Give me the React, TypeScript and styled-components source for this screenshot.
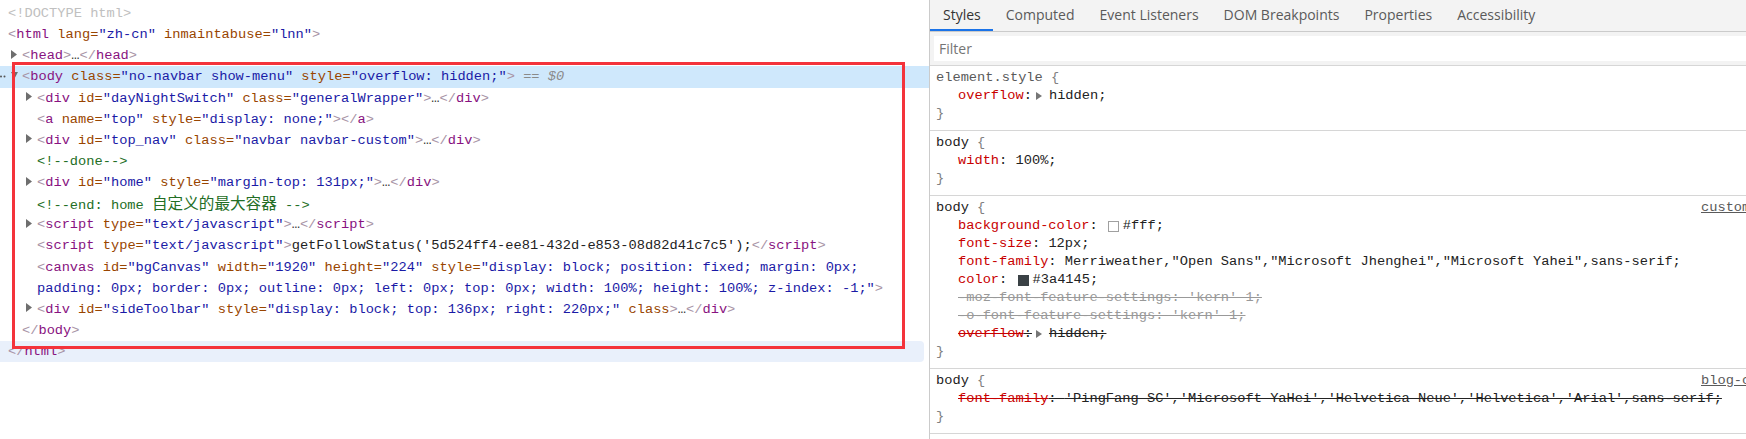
import React from "react";
import styled, { createGlobalStyle } from "styled-components";

const MONO = `"Liberation Mono", "DejaVu Sans Mono", monospace`;
const UI = `"Open Sans", "Noto Sans", sans-serif`;

type Attr = [string, string | null];

const TABS = [
  "Styles",
  "Computed",
  "Event Listeners",
  "DOM Breakpoints",
  "Properties",
  "Accessibility",
];

// arrows for the dom tree
const Arrow: React.FC<{ open?: boolean }> = ({ open }) =>
  open ? (
    <svg width="7" height="7" viewBox="0 0 7 7">
      <polygon points="0,0 7,0 3.5,6.5" fill="#6e6e6e" />
    </svg>
  ) : (
    <svg width="6" height="9" viewBox="0 0 6 9">
      <polygon points="0,0 6,4.5 0,9" fill="#6e6e6e" />
    </svg>
  );

const OpenTag: React.FC<{ name: string; attrs?: Attr[] }> = ({ name, attrs = [] }) => (
  <>
    <Bracket>&lt;</Bracket>
    <TagName>{name}</TagName>
    {attrs.map(([k, v], i) => (
      <React.Fragment key={i}>
        {" "}
        <AttrName>{k}</AttrName>
        {v !== null && (
          <>
            <AttrName>=</AttrName>
            <AttrValue>"{v}"</AttrValue>
          </>
        )}
      </React.Fragment>
    ))}
    <Bracket>&gt;</Bracket>
  </>
);

const CloseTag: React.FC<{ name: string }> = ({ name }) => (
  <>
    <Bracket>&lt;/</Bracket>
    <TagName>{name}</TagName>
    <Bracket>&gt;</Bracket>
  </>
);

const Collapsed: React.FC<{ name: string; attrs?: Attr[] }> = ({ name, attrs }) => (
  <>
    <OpenTag name={name} attrs={attrs} />
    <Ellipsis>…</Ellipsis>
    <CloseTag name={name} />
  </>
);

// level -> [padding-left, gutter width]
const LEVEL: Record<number, [number, number]> = { 0: [0, 8], 1: [11, 11], 2: [26, 11] };

const Node: React.FC<{
  level: number;
  arrow?: boolean;
  children: React.ReactNode;
  hover?: boolean;
}> = ({ level, arrow, children, hover }) => (
  <Row $pad={LEVEL[level][0]} $hover={hover}>
    <Gutter $w={LEVEL[level][1]}>{arrow && <Arrow />}</Gutter>
    <Code>{children}</Code>
  </Row>
);

const Prop: React.FC<{
  name: string;
  struck?: boolean;
  expander?: boolean;
  swatch?: string;
  children: React.ReactNode;
}> = ({ name, struck, expander, swatch, children }) => (
  <Line $indent>
    <PropName $struck={struck}>{name}</PropName>
    <Plain $struck={struck}>{expander ? ":" : ": "}</Plain>
    {expander && (
      <Expander>
        <svg width="6" height="8" viewBox="0 0 6 8">
          <polygon points="0,0 6,4 0,8" fill="#767676" />
        </svg>
      </Expander>
    )}
    {swatch && <Swatch $color={swatch} />}
    <Plain $struck={struck}>{children}</Plain>
  </Line>
);

const Selector: React.FC<{ text: string; muted?: boolean; source?: string }> = ({
  text,
  muted,
  source,
}) => (
  <Line>
    <SelectorText $muted={muted}>{text}</SelectorText>
    <Brace> {"{"}</Brace>
    {source && <Source>{source}</Source>}
  </Line>
);

const App: React.FC = () => {
  return (
    <>
      <GlobalStyle />
      <Page>
        <ElementsPane>
          <Row $pad={0}>
            <Gutter $w={8} />
            <Doctype>&lt;!DOCTYPE html&gt;</Doctype>
          </Row>
          <Node level={0}>
            <OpenTag name="html" attrs={[["lang", "zh-cn"], ["inmaintabuse", "lnn"]]} />
          </Node>
          <Node level={1} arrow>
            <Collapsed name="head" />
          </Node>
          <Row $pad={0} $selected>
            <Dots>
              <svg width="6" height="3" viewBox="0 0 6 3">
                <circle cx="1" cy="1.5" r="1" fill="#555" />
                <circle cx="4.5" cy="1.5" r="1" fill="#555" />
              </svg>
            </Dots>
            <Gutter $w={11}>
              <Arrow open />
            </Gutter>
            <Code>
              <OpenTag
                name="body"
                attrs={[
                  ["class", "no-navbar show-menu"],
                  ["style", "overflow: hidden;"],
                ]}
              />
              <Muted> == </Muted>
              <Muted $italic>$0</Muted>
            </Code>
          </Row>
          <Node level={2} arrow>
            <Collapsed
              name="div"
              attrs={[
                ["id", "dayNightSwitch"],
                ["class", "generalWrapper"],
              ]}
            />
          </Node>
          <Node level={2}>
            <OpenTag
              name="a"
              attrs={[
                ["name", "top"],
                ["style", "display: none;"],
              ]}
            />
            <CloseTag name="a" />
          </Node>
          <Node level={2} arrow>
            <Collapsed
              name="div"
              attrs={[
                ["id", "top_nav"],
                ["class", "navbar navbar-custom"],
              ]}
            />
          </Node>
          <Node level={2}>
            <Comment>&lt;!--done--&gt;</Comment>
          </Node>
          <Node level={2} arrow>
            <Collapsed
              name="div"
              attrs={[
                ["id", "home"],
                ["style", "margin-top: 131px;"],
              ]}
            />
          </Node>
          <Node level={2}>
            <Comment>
              &lt;!--end: home <Cjk>自定义的最大容器</Cjk> --&gt;
            </Comment>
          </Node>
          <Node level={2} arrow>
            <Collapsed name="script" attrs={[["type", "text/javascript"]]} />
          </Node>
          <Node level={2}>
            <OpenTag name="script" attrs={[["type", "text/javascript"]]} />
            getFollowStatus('5d524ff4-ee81-432d-e853-08d82d41c7c5');
            <CloseTag name="script" />
          </Node>
          <Node level={2}>
            <Bracket>&lt;</Bracket>
            <TagName>canvas</TagName> <AttrName>id=</AttrName>
            <AttrValue>"bgCanvas"</AttrValue> <AttrName>width=</AttrName>
            <AttrValue>"1920"</AttrValue> <AttrName>height=</AttrName>
            <AttrValue>"224"</AttrValue> <AttrName>style=</AttrName>
            <AttrValue>"display: block; position: fixed; margin: 0px;</AttrValue>
          </Node>
          <Node level={2}>
            <AttrValue>
              padding: 0px; border: 0px; outline: 0px; left: 0px; top: 0px; width: 100%; height:
              100%; z-index: -1;"
            </AttrValue>
            <Bracket>&gt;</Bracket>
          </Node>
          <Node level={2} arrow>
            <Collapsed
              name="div"
              attrs={[
                ["id", "sideToolbar"],
                ["style", "display: block; top: 136px; right: 220px;"],
                ["class", null],
              ]}
            />
          </Node>
          <Node level={1}>
            <CloseTag name="body" />
          </Node>
          <Node level={0} hover>
            <CloseTag name="html" />
          </Node>

          <Annotation />
        </ElementsPane>

        <StylesPane>
          <TabBar>
            {TABS.map((t, i) => (
              <Tab key={t} $active={i === 0}>
                {t}
              </Tab>
            ))}
          </TabBar>
          <FilterBar>
            <FilterInput placeholder="Filter" readOnly />
          </FilterBar>

          <Rule>
            <Selector text="element.style" muted />
            <Prop name="overflow" expander>
              hidden;
            </Prop>
            <Line>
              <Brace>{"}"}</Brace>
            </Line>
          </Rule>

          <Rule>
            <Selector text="body" />
            <Prop name="width">100%;</Prop>
            <Line>
              <Brace>{"}"}</Brace>
            </Line>
          </Rule>

          <Rule>
            <Selector text="body" source="custom.css:1" />
            <Prop name="background-color" swatch="#ffffff">
              #fff;
            </Prop>
            <Prop name="font-size">12px;</Prop>
            <Prop name="font-family">
              Merriweather,"Open Sans","Microsoft Jhenghei","Microsoft Yahei",sans-serif;
            </Prop>
            <Prop name="color" swatch="#3a4145">
              #3a4145;
            </Prop>
            <Line $indent $inactive>
              -moz-font-feature-settings: 'kern' 1;
            </Line>
            <Line $indent $inactive>
              -o-font-feature-settings: 'kern' 1;
            </Line>
            <Prop name="overflow" expander struck>
              hidden;
            </Prop>
            <Line>
              <Brace>{"}"}</Brace>
            </Line>
          </Rule>

          <Rule>
            <Selector text="body" source="blog-common.min.css:1" />
            <Prop name="font-family" struck>
              'PingFang SC','Microsoft YaHei','Helvetica Neue','Helvetica','Arial',sans-serif;
            </Prop>
            <Line>
              <Brace>{"}"}</Brace>
            </Line>
          </Rule>
        </StylesPane>
      </Page>
    </>
  );
};

const GlobalStyle = createGlobalStyle`
  html, body {
    margin: 0;
    padding: 0;
    background: #fff;
    overflow: hidden;
  }
`;

const Page = styled.div`
  display: flex;
  width: 1746px;
  height: 439px;
  overflow: hidden;
`;

const ElementsPane = styled.section`
  position: relative;
  flex: none;
  width: 929px;
  padding-top: 3px;
  box-sizing: border-box;
  font-family: ${MONO};
  font-size: 13.7px;
  color: #222;
`;

const Row = styled.div<{ $pad: number; $selected?: boolean; $hover?: boolean }>`
  display: flex;
  align-items: center;
  height: 21.13px;
  line-height: 21px;
  white-space: pre;
  padding-left: ${(p) => p.$pad}px;
  background: ${(p) => (p.$selected ? "#cfe8fc" : p.$hover ? "#e9f0fb" : "transparent")};
  margin-right: ${(p) => (p.$hover ? 5 : 0)}px;
  border-radius: ${(p) => (p.$hover ? "0 4px 4px 0" : "0")};
`;

const Gutter = styled.span<{ $w: number }>`
  flex: none;
  width: ${(p) => p.$w}px;
  display: flex;
  align-items: center;
  padding-bottom: 3px;
`;

const Dots = styled.span`
  flex: none;
  width: 11px;
  display: flex;
  align-items: center;
`;

const Code = styled.span`
  white-space: pre;
`;

const Doctype = styled.span`
  color: #c0c0c0;
`;

const Bracket = styled.span`
  color: #a894a6;
`;

const TagName = styled.span`
  color: #881280;
`;

const AttrName = styled.span`
  color: #994500;
`;

const AttrValue = styled.span`
  color: #1a1aa6;
`;

const Ellipsis = styled.span`
  color: #333;
`;

const Comment = styled.span`
  color: #236e25;
`;

const Cjk = styled.span`
  font-family: "Noto Sans CJK SC", sans-serif;
  font-size: 15.6px;
`;

const Muted = styled.span<{ $italic?: boolean }>`
  color: #8a8a8a;
  font-style: ${(p) => (p.$italic ? "italic" : "normal")};
`;

// the red box drawn over the screenshot
const Annotation = styled.div`
  position: absolute;
  left: 12px;
  top: 62px;
  width: 893px;
  height: 287px;
  border: 3px solid #f4333b;
  box-sizing: border-box;
  pointer-events: none;
`;

const StylesPane = styled.section`
  flex: 1;
  min-width: 0;
  display: flex;
  flex-direction: column;
  border-left: 1px solid #cbcbcb;
  overflow: hidden;
  font-family: ${MONO};
  font-size: 13.7px;
  color: #222;
`;

const TabBar = styled.nav`
  display: flex;
  height: 31px;
  background: #f3f3f3;
  border-bottom: 1px solid #cbcbcb;
`;

const Tab = styled.div<{ $active?: boolean }>`
  padding: 0 12.5px;
  box-sizing: border-box;
  height: 31px;
  line-height: 30px;
  font-family: ${UI};
  font-size: 14px;
  white-space: nowrap;
  color: ${(p) => (p.$active ? "#333" : "#5a5a5a")};
  border-bottom: 2px solid ${(p) => (p.$active ? "#1a73e8" : "transparent")};
  padding-left: ${(p) => (p.$active ? 13 : 12.5)}px;
`;

const FilterBar = styled.div`
  padding: 4px 0 4px 4px;
  background: #f3f3f3;
  border-bottom: 1px solid #d6d6d6;
`;

const FilterInput = styled.input`
  display: block;
  width: 100%;
  height: 25px;
  box-sizing: border-box;
  border: none;
  outline: none;
  margin: 0;
  padding: 0 0 0 5px;
  background: #fff;
  font-family: ${UI};
  font-size: 14px;

  &::placeholder {
    color: #757575;
  }
`;

const Rule = styled.div`
  padding: 3px 0 7px;
  border-bottom: 1px solid #d6d6d6;
`;

const Line = styled.div<{ $indent?: boolean; $inactive?: boolean }>`
  display: flex;
  align-items: center;
  height: 18px;
  line-height: 18px;
  white-space: pre;
  padding-left: ${(p) => (p.$indent ? 28 : 6)}px;
  color: ${(p) => (p.$inactive ? "#999" : "#222")};
  text-decoration: ${(p) => (p.$inactive ? "line-through" : "none")};
`;

const SelectorText = styled.span<{ $muted?: boolean }>`
  color: ${(p) => (p.$muted ? "#5a5a5a" : "#222")};
`;

const Brace = styled.span`
  color: #808080;
`;

const Source = styled.span`
  margin-left: auto;
  flex: none;
  width: 45px;
  overflow: hidden;
  color: #5a5a5a;
  text-decoration: underline;
`;

const PropName = styled.span<{ $struck?: boolean }>`
  color: #c80000;
  text-decoration: ${(p) => (p.$struck ? "line-through" : "none")};
`;

const Plain = styled.span<{ $struck?: boolean }>`
  color: #222;
  text-decoration: ${(p) => (p.$struck ? "line-through" : "none")};
`;

const Expander = styled.span`
  display: flex;
  align-items: center;
  margin: 0 7px 0 4px;
`;

const Swatch = styled.span<{ $color: string }>`
  flex: none;
  width: 11px;
  height: 11px;
  box-sizing: border-box;
  margin: 0 4px 0 2px;
  background: ${(p) => p.$color};
  border: 1px solid ${(p) => (p.$color === "#ffffff" ? "#a0a0a0" : "#3a4145")};
`;

export default App;
